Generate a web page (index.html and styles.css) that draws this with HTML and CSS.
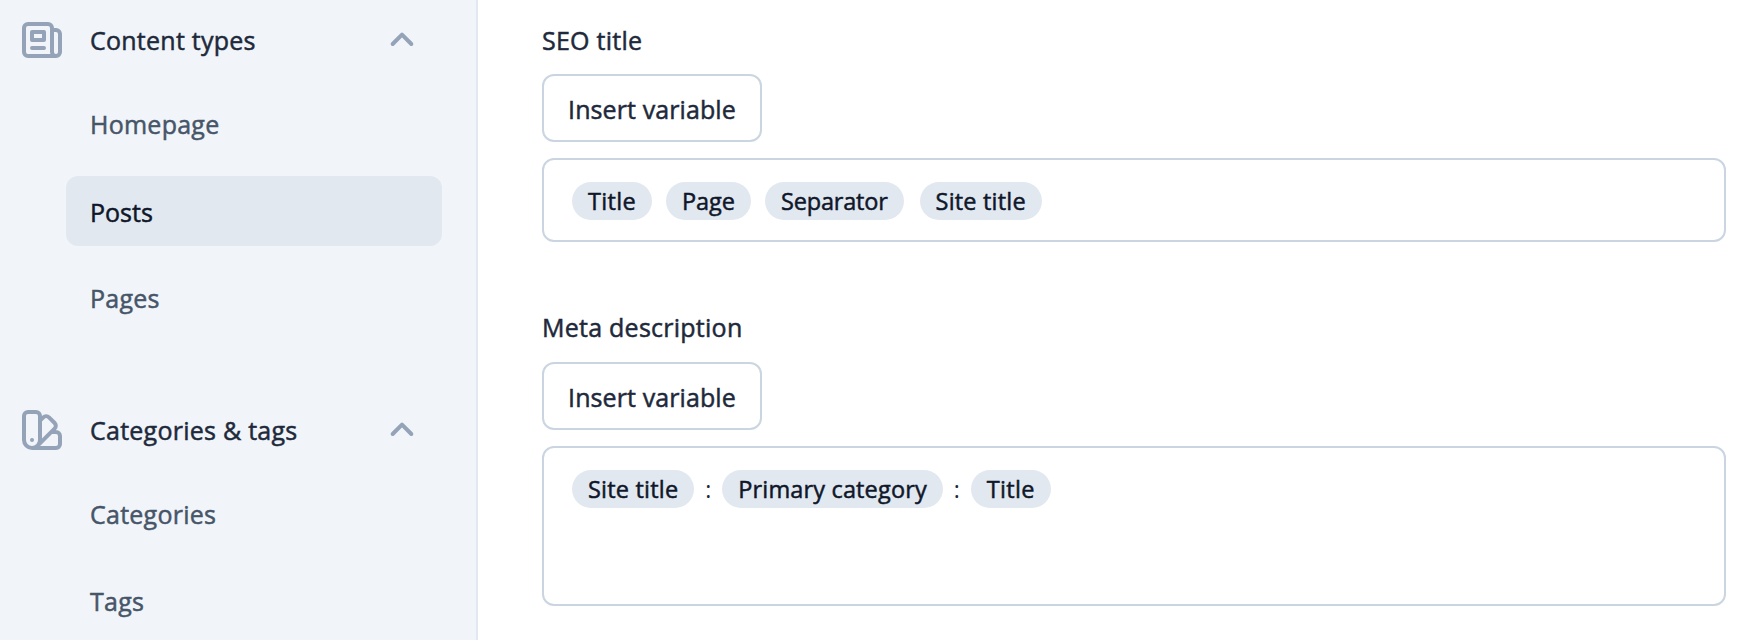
FILE: index.html
```html
<!DOCTYPE html>
<html lang="en">
<head>
    <meta charset="UTF-8">
    <meta name="viewport" content="width=device-width, initial-scale=1.0">
    <title>Content types - Posts</title>
    <link rel="stylesheet" href="styles.css">
</head>
<body>
    <nav class="sidebar">
        <div class="menu-group">
            <div class="menu-header">
                <svg class="menu-icon" viewBox="0 0 24 24">
                    <path d="M19 20H5a2 2 0 01-2-2V6a2 2 0 012-2h10a2 2 0 012 2v1m2 13a2 2 0 01-2-2V7m2 13a2 2 0 002-2V9a2 2 0 00-2-2h-2m-4-3H9M7 16h6M7 8h6v4H7V8z"/>
                </svg>
                <span class="menu-title">Content types</span>
                <svg class="chevron" viewBox="0 0 24 24"><path d="M5 15l7-7 7 7"/></svg>
            </div>
            <ul class="menu-list">
                <li>Homepage</li>
                <li class="active">Posts</li>
                <li>Pages</li>
            </ul>
        </div>

        <div class="menu-group">
            <div class="menu-header">
                <svg class="menu-icon" viewBox="0 0 24 24">
                    <path d="M7 21a4 4 0 01-4-4V5a2 2 0 012-2h4a2 2 0 012 2v12a4 4 0 01-4 4zm0 0h12a2 2 0 002-2v-4a2 2 0 00-2-2h-2.343M11 7.343l1.657-1.657a2 2 0 012.828 0l2.829 2.829a2 2 0 010 2.828l-8.486 8.485M7 17h.01"/>
                </svg>
                <span class="menu-title">Categories &amp; tags</span>
                <svg class="chevron" viewBox="0 0 24 24"><path d="M5 15l7-7 7 7"/></svg>
            </div>
            <ul class="menu-list">
                <li>Categories</li>
                <li>Tags</li>
            </ul>
        </div>
    </nav>

    <main class="content">
        <section class="field">
            <h2>SEO title</h2>
            <button type="button" class="insert-variable">Insert variable</button>
            <div class="editor">
                <span class="chip chip-title">Title</span>
                <span class="chip">Page</span>
                <span class="chip chip-separator">Separator</span>
                <span class="chip chip-site">Site title</span>
            </div>
        </section>

        <section class="field">
            <h2>Meta description</h2>
            <button type="button" class="insert-variable">Insert variable</button>
            <div class="editor editor-large">
                <span class="chip chip-site">Site title</span>
                <span class="colon">:</span>
                <span class="chip chip-category">Primary category</span>
                <span class="colon">:</span>
                <span class="chip chip-title">Title</span>
            </div>
        </section>
    </main>
</body>
</html>
```
FILE: styles.css
```css
* {
    box-sizing: border-box;
}
body {
    font-family: 'Segoe UI', 'Open Sans', sans-serif;
    font-size: 25px;
    font-weight: 500;
    letter-spacing: 0.25px;
    -webkit-text-stroke: 0.5px;
    margin: 0;
    display: flex;
    height: 640px;
    overflow: hidden;
    background-color: #ffffff;
    color: #1e293b;
}
.sidebar {
    width: 478px;
    height: 640px;
    flex-shrink: 0;
    overflow: hidden;
    background-color: #f1f5f9;
    border-right: 2px solid #e2e8f0;
}
.menu-group {
    height: 390px;
}
.menu-group:last-child {
    height: 250px;
}
.menu-header {
    display: flex;
    align-items: center;
    height: 80px;
    padding: 0 58px 0 18px;
}
.menu-icon {
    width: 48px;
    height: 48px;
    margin-right: 24px;
    fill: none;
    stroke: #94a3b8;
    stroke-width: 2;
    stroke-linecap: round;
    stroke-linejoin: round;
}
.menu-title {
    flex-grow: 1;
}
.chevron {
    width: 32px;
    height: 32px;
    margin-bottom: 1px;
    fill: none;
    stroke: #94a3b8;
    stroke-width: 3;
    stroke-linecap: round;
    stroke-linejoin: round;
}
.menu-list {
    list-style: none;
    margin: 9px 34px 0 66px;
    padding: 0;
}
.menu-list li {
    height: 70px;
    line-height: 71px;
    margin-bottom: 17px;
    padding-left: 24px;
    border-radius: 12px;
    color: #475569;
}
.menu-list li:last-child {
    margin-bottom: 0;
}
.menu-list li.active {
    line-height: 72px;
    letter-spacing: 0;
    background-color: #e2e8f0;
    color: #0f172a;
}
.content {
    flex-grow: 1;
    padding: 19px 32px 0 64px;
}
.field {
    height: 287px;
}
.field h2 {
    height: 43px;
    line-height: 42px;
    margin: 0 0 12px;
    font-size: 25px;
    font-weight: 500;
}
.field + .field h2 {
    height: 44px;
}
.insert-variable {
    display: block;
    width: 220px;
    height: 68px;
    padding: 1px 0 0;
    border: 2px solid #cbd5e1;
    border-radius: 12px;
    background-color: #fff;
    color: #1e293b;
    font: inherit;
    letter-spacing: 0.1px;
}
.editor {
    display: flex;
    align-items: flex-start;
    height: 84px;
    margin-top: 16px;
    padding: 22px 28px;
    border: 2px solid #cbd5e1;
    border-radius: 12px;
}
.editor-large {
    height: 160px;
}
.chip {
    height: 38px;
    line-height: 39px;
    margin-right: 14px;
    padding: 0 16px;
    border-radius: 19px;
    background-color: #e2e8f0;
    color: #0f172a;
    font-size: 23.5px;
    letter-spacing: 0;
}
.chip-title {
    letter-spacing: 0.3px;
}
.chip-separator {
    margin-right: 16px;
    letter-spacing: -0.2px;
}
.chip-site {
    letter-spacing: 0.2px;
}
.chip-category {
    letter-spacing: 0.15px;
}
.editor-large .chip {
    margin-right: 0;
}
.colon {
    width: 28px;
    line-height: 38px;
    text-align: center;
    font-size: 23px;
    font-weight: 400;
    -webkit-text-stroke: 0;
}
```
